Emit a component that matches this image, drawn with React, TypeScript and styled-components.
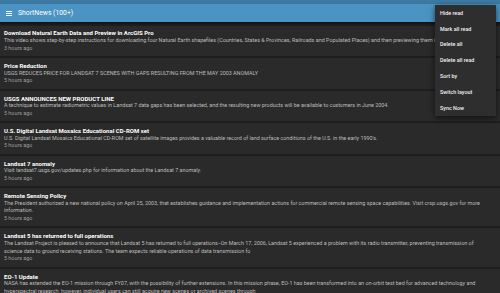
import { FC } from "react";
import styled, { createGlobalStyle } from "styled-components";

const GlobalStyle = createGlobalStyle`
  html, body {
    margin: 0;
    padding: 0;
    background: #1e1e1e;
  }
  body {
    font-family: Roboto, "Liberation Sans", sans-serif;
  }
`;

type NewsItem = {
  title: string;
  summary: string;
  age: string;
};

const news: NewsItem[] = [
  {
    title: "Download Natural Earth Data and Preview in ArcGIS Pro",
    summary:
      "This video shows step-by-step instructions for downloading four Natural Earth shapefiles (Countries, States & Provinces, Railroads and Populated Places) and then previewing them in ArcGIS Pro.",
    age: "3 hours ago",
  },
  {
    title: "Price Reduction",
    summary:
      "USGS REDUCES PRICE FOR LANDSAT 7 SCENES WITH GAPS RESULTING FROM THE MAY 2003 ANOMALY",
    age: "5 hours ago",
  },
  {
    title: "USGS ANNOUNCES NEW PRODUCT LINE",
    summary:
      "A technique to estimate radiometric values in Landsat 7 data gaps has been selected, and the resulting new products will be available to customers in June 2004.",
    age: "5 hours ago",
  },
  {
    title: "U.S. Digital Landsat Mosaics Educational CD-ROM set",
    summary:
      "U.S. Digital Landsat Mosaics Educational CD-ROM set of satellite images provides a valuable record of land surface conditions of the U.S. in the early 1990's.",
    age: "5 hours ago",
  },
  {
    title: "Landsat 7 anomaly",
    summary:
      "Visit landsat7.usgs.gov/updates.php for information about the Landsat 7 anomaly.",
    age: "5 hours ago",
  },
  {
    title: "Remote Sensing Policy",
    summary:
      "The President authorized a new national policy on April 25, 2003, that establishes guidance and implementation actions for commercial remote sensing space capabilities. Visit crsp.usgs.gov for more information.",
    age: "5 hours ago",
  },
  {
    title: "Landsat 5 has returned to full operations",
    summary:
      "The Landsat Project is pleased to announce that Landsat 5 has returned to full operations--On March 17, 2006, Landsat 5 experienced a problem with its radio transmitter, preventing transmission of science data to ground receiving stations. The team expects reliable operations of data transmission fo",
    age: "5 hours ago",
  },
  {
    title: "EO-1 Update",
    summary:
      "NASA has extended the EO-1 mission through FY07, with the possibility of further extensions. In this mission phase, EO-1 has been transformed into an on-orbit test bed for advanced technology and hyperspectral research; however, individual users can still acquire new scenes or archived scenes through",
    age: "5 hours ago",
  },
];

const menuItems = [
  "Hide read",
  "Mark all read",
  "Delete all",
  "Delete all read",
  "Sort by",
  "Switch layout",
  "Sync Now",
];

const Screen = styled.div`
  position: relative;
  height: 293px;
  overflow: hidden;
  display: flex;
  flex-direction: column;
  background: #1e1e1e;
`;

const StatusBar = styled.div`
  height: 4px;
  background: #3d7aa3;
  flex-shrink: 0;
`;

const Toolbar = styled.header`
  height: 18px;
  flex-shrink: 0;
  display: flex;
  align-items: center;
  gap: 6px;
  padding-left: 6px;
  background: #4b93c3;
  box-shadow: 0 1px 2px rgba(0, 0, 0, 0.5);
  position: relative;
  z-index: 1;
`;

const ToolbarTitle = styled.h1`
  margin: 0;
  font-size: 6.8px;
  font-weight: 400;
  color: #ffffff;
`;

const List = styled.main`
  display: flex;
  flex-direction: column;
  gap: 2px;
  padding-top: 3.5px;
`;

const Card = styled.article`
  background: #2a2a2a;
  padding: 3.9px 8px 3.9px 4px;
  display: flex;
  flex-direction: column;
`;

const Title = styled.h2`
  margin: 0;
  font-size: 6px;
  line-height: 7.6px;
  font-weight: 700;
  color: #ffffff;
`;

const Summary = styled.p`
  margin: 0;
  font-size: 5.4px;
  line-height: 7.6px;
  color: #bdbdbd;
`;

const Age = styled.span`
  font-size: 5.4px;
  line-height: 7.6px;
  color: #9e9e9e;
`;

const Menu = styled.ul`
  position: absolute;
  top: 5px;
  right: 4px;
  width: 61px;
  margin: 0;
  padding: 0;
  list-style: none;
  background: #2e2e2e;
  box-shadow: 0 2px 6px rgba(0, 0, 0, 0.6);
  z-index: 2;
`;

const MenuEntry = styled.li`
  height: 15.8px;
  display: flex;
  align-items: center;
  padding-left: 5px;
  font-size: 5.4px;
  font-weight: 500;
  color: #f2f2f2;
`;

const MenuIcon: FC = () => (
  <svg width="6" height="5" viewBox="0 0 6 5">
    <rect x="0" y="0" width="6" height="1" fill="#ffffff" />
    <rect x="0" y="2" width="6" height="1" fill="#ffffff" />
    <rect x="0" y="4" width="6" height="1" fill="#ffffff" />
  </svg>
);

const NewsCard: FC<{ item: NewsItem }> = ({ item }) => (
  <Card>
    <Title>{item.title}</Title>
    <Summary>{item.summary}</Summary>
    <Age>{item.age}</Age>
  </Card>
);

export default function App() {
  return (
    <>
      <GlobalStyle />
      <Screen>
        <StatusBar />
        <Toolbar>
          <MenuIcon />
          <ToolbarTitle>ShortNews (100+)</ToolbarTitle>
        </Toolbar>
        <List>
          {news.map((item) => (
            <NewsCard key={item.title} item={item} />
          ))}
        </List>
        <Menu>
          {menuItems.map((label) => (
            <MenuEntry key={label}>{label}</MenuEntry>
          ))}
        </Menu>
      </Screen>
    </>
  );
}
